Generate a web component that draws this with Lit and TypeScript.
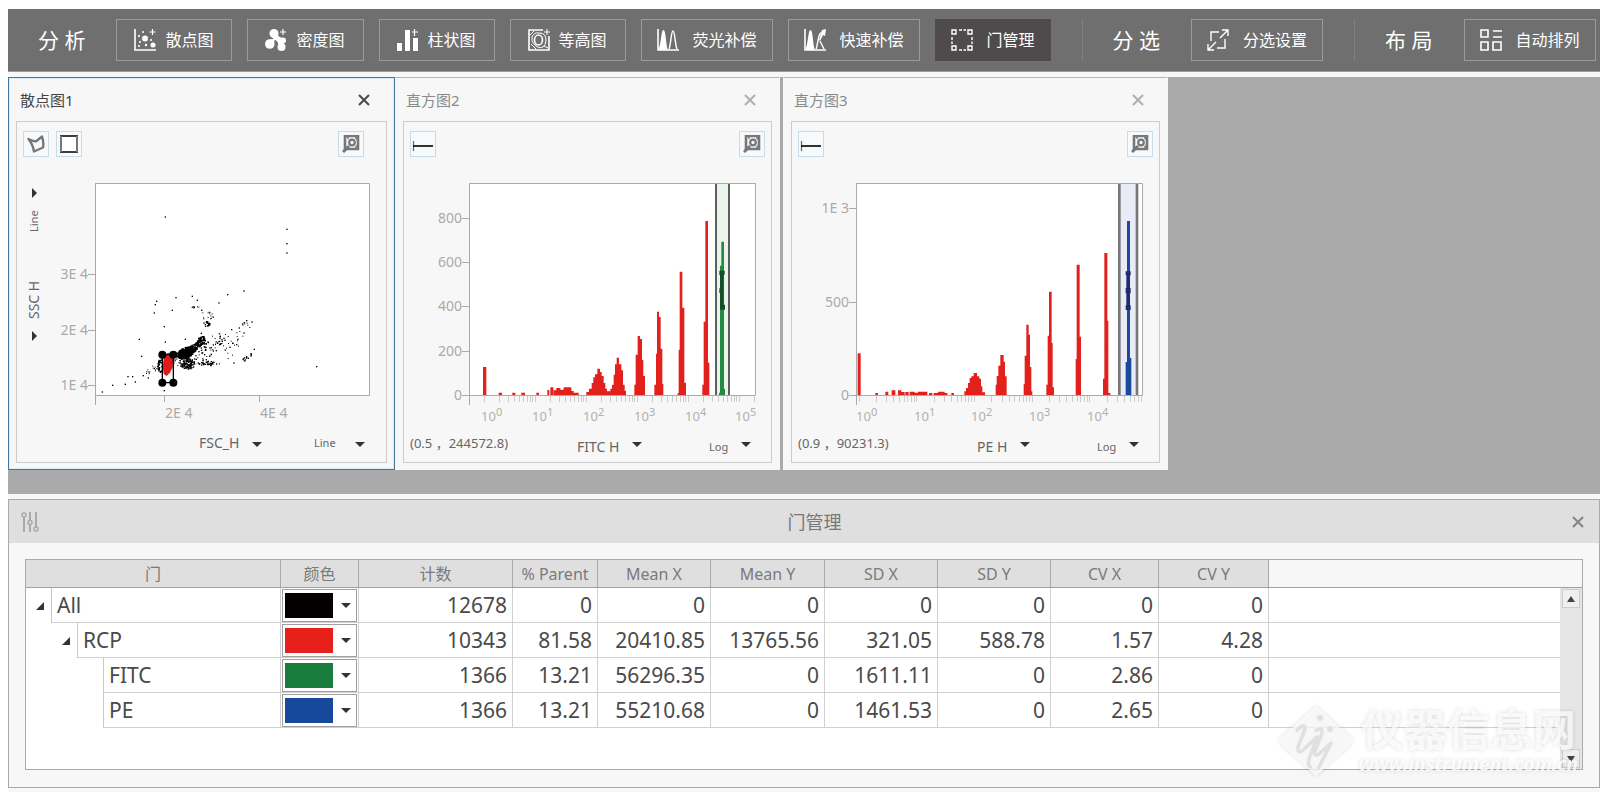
import { LitElement, html, svg, css } from "lit";
import { customElement, property } from "lit/decorators.js";

type Bar = [from: number, to: number, top: number];

const AXIS_GREY = "#aaaaaa";

const arrowIcon = html`<svg class="arrow" width="10" height="5" viewBox="0 0 10 5" aria-hidden="true"><path d="M0 0h10L5 5z" fill="currentColor" /></svg>`;
const closeIcon = html`<svg width="12" height="12" viewBox="0 0 12 12" aria-hidden="true"><path d="M1 1l10 10M11 1L1 11" stroke="currentColor" stroke-width="2" /></svg>`;

const icons: Record<string, unknown> = {
  scatter: svg`<path d="M1 0v21h21" fill="none" stroke="#fff" stroke-width="1.6"/><g fill="#fff"><circle cx="11" cy="9.500" r="3"/><circle cx="5" cy="7" r="1.1"/><circle cx="6" cy="13" r="1"/><circle cx="5" cy="17" r="1.1"/><circle cx="12" cy="16" r="1.2"/><circle cx="17" cy="11" r="1"/><circle cx="19" cy="16" r="2.500"/><circle cx="9" cy="3" r="1"/></g><path d="M18.500 0v6M15.500 3h6" stroke="#fff" stroke-width="1.2"/>`,
  density: svg`<g fill="#fff"><circle cx="9" cy="4.500" r="4.500"/><circle cx="4.800" cy="15" r="4.800"/><circle cx="16.500" cy="18" r="4"/><circle cx="18" cy="11.500" r="3"/><path d="M12.500 4q0 4 5 5l0 5 2 3-6 0q0-4-3-6-4-2-4-6zM5 10.500q5 0 5-4l1 4q-2 0-2 4z"/></g><path d="M18 0v6M15 3h6" stroke="#fff" stroke-width="1.2"/>`,
  bars: svg`<g fill="#fff"><rect x="0" y="14" width="5" height="8"/><rect x="8" y="1" width="5" height="21"/><rect x="16" y="9" width="5" height="13"/></g><path d="M17.500 0v7M15 3h6" stroke="#fff" stroke-width="1.2"/>`,
  contour: svg`<g fill="none" stroke="#fff"><path d="M15 1H1v20h20V7" stroke-width="1.6"/><path d="M4 8q2-5 7-4 7 0 7 7 0 5-3 7-5 2-9-3-3-3-2-7z" stroke-width="1"/><ellipse cx="10.500" cy="11" rx="4" ry="5" stroke-width="1.600"/><path d="M2 6l4-4M3 15l5 5M16 17l4 2" stroke-width="1"/><path d="M19 0v6M16 3h6" stroke-width="1"/></g>`,
  comp: svg`<path d="M1 0v21h21" fill="none" stroke="#fff" stroke-width="1.600"/><path d="M1 21C4 18 4 1 6.500 1S9 17 11 21z" fill="#fff"/><path d="M12 20C14 16 14 2 16 2s2 14 4 18" fill="none" stroke="#fff" stroke-width="1.400"/>`,
  fastcomp: svg`<path d="M1 0v21h21" fill="none" stroke="#fff" stroke-width="1.600"/><path d="M1 21C4 18 4 1 6.500 1S9 17 11 21z" fill="#fff"/><path d="M12 20C14 16 14 4 17 4M16 12l4 8" fill="none" stroke="#fff" stroke-width="1.400"/><path d="M18 1l4-1-1 7-2-1-3 6-1-1 2-7z" fill="#fff"/>`,
  gate: svg`<g fill="none" stroke="#fff" stroke-width="1.400"><path d="M1 1h4v4H1zM17 1h4v4h-4zM1 17h4v4H1zM17 17h4v4h-4z"/><path d="M8 1h7M8 21h7M1 8v7M21 8v7" stroke-dasharray="3 1.500"/></g>`,
  sort: svg`<g fill="none" stroke="#fff" stroke-width="1.400"><path d="M15 1h6v6M21 1l-8 8M7 21H1v-6M1 21l8-8"/><path d="M12 3H4v9M18 10v9h-8"/></g>`,
  layout: svg`<g fill="none" stroke="#fff" stroke-width="1.600"><path d="M1 1h7v7H1zM1 13h7v8H1zM13 13h8v8h-8zM13 2h9M13 8h9"/></g>`,
};

const toolGroups = [
  {
    title: "分 析",
    tools: [
      { label: "散点图", icon: "scatter", tight: true },
      { label: "密度图", icon: "density", tight: true },
      { label: "柱状图", icon: "bars", tight: true },
      { label: "等高图", icon: "contour", tight: true },
      { label: "荧光补偿", icon: "comp" },
      { label: "快速补偿", icon: "fastcomp" },
      { label: "门管理", icon: "gate", active: true },
    ],
  },
  { title: "分 选", tools: [{ label: "分选设置", icon: "sort" }] },
  { title: "布 局", tools: [{ label: "自动排列", icon: "layout" }] },
] as { title: string; tools: { label: string; icon: string; tight?: boolean; active?: boolean }[] }[];

@customElement("tool-bar")
class ToolBar extends LitElement {
  static styles = css`
    :host { display: block; }
    .bar { display: flex; align-items: center; height: 63px; background: #6f6f6f; border-bottom: 1px solid #9c9c9c; box-sizing: border-box; white-space: nowrap; }
    .group { display: flex; align-items: center; gap: 31px; padding: 0 31px 0 30px; height: 42px; }
    .group + .group { border-left: 1px solid #7f7f7f; }
    .title { margin: 0; font-size: 21px; line-height: 28px; font-weight: 400; color: #fff; }
    .tools { display: flex; gap: 15px; }
    .tool { display: flex; align-items: center; gap: 14px; height: 42px; padding: 0 15px; box-sizing: border-box; border: 1px solid #9b9b9b; background: transparent; color: #fff; font-family: inherit; font-size: 16px; line-height: 20px; }
    .tight { gap: 9px; padding: 0 18px 0 17px; }
    .active { background: #4f4b4c; border-color: #4f4b4c; }
  `;
  render() {
    return html`<nav class="bar">
      ${toolGroups.map((g) => html`<section class="group">
        <h2 class="title">${g.title}</h2>
        <div class="tools">
          ${g.tools.map((t) => html`<button class="tool ${t.tight ? "tight" : ""} ${t.active ? "active" : ""}">
            <svg width="22" height="22" viewBox="0 0 22 22" aria-hidden="true">${icons[t.icon]}</svg>${t.label}</button>`)}
        </div>
      </section>`)}
    </nav>`;
  }
}

/* Deterministic noise for the event cloud. */
function noise(seed: number) {
  let s = seed;
  return () => {
    s = (s * 16807) % 2147483647;
    return s / 2147483647;
  };
}

/* cx, cy, spread x, spread y, slope, count, dot size */
const clusters: [number, number, number, number, number, number, number][] = [
  [556, 832, 26, 16, -0.3, 260, 5],
  [578, 818, 20, 12, -0.5, 80, 5],
  [601, 796, 12, 13, -0.3, 40, 5],
  [562, 866, 22, 16, 0, 90, 4],
  [540, 858, 26, 18, 0, 30, 3],
  [622, 865, 26, 7, 0, 30, 4],
  [590, 835, 60, 30, -0.3, 50, 4],
  [655, 820, 70, 48, -0.2, 40, 3],
  [660, 795, 16, 14, 0, 12, 4],
  [720, 765, 34, 26, -0.5, 10, 3],
  [740, 846, 14, 10, -0.5, 12, 4],
  [619, 746, 10, 8, 0, 20, 4],
  [620, 722, 20, 12, 0, 14, 3],
  [585, 697, 16, 3, 0, 9, 3],
  [480, 872, 9, 20, 0, 36, 4],
  [455, 886, 18, 16, -0.3, 14, 3],
];

const strayEvents: [number, number][] = [
  [496, 427], [861, 464], [861, 507], [861, 535], [732, 649], [683, 660], [657, 685], [528, 669], [577, 665],
  [592, 677], [470, 680], [466, 690], [463, 715], [517, 707], [493, 756], [418, 794], [496, 802], [425, 845],
  [556, 794], [604, 776], [605, 707], [740, 738], [733, 744], [756, 742], [728, 748], [695, 765], [718, 760],
  [732, 775], [763, 824], [754, 841], [702, 865], [950, 876], [384, 906], [398, 906], [406, 922], [376, 929],
  [338, 932], [307, 952], [430, 903], [445, 910], [493, 948], [714, 794], [710, 810], [698, 806], [690, 818], [676, 826],
];

function cloud() {
  const rnd = noise(4711);
  const dots: unknown[] = [];
  for (const [cx, cy, sx, sy, slope, count, size] of clusters) {
    for (let i = 0; i < count; i++) {
      const a = rnd() * Math.PI * 2;
      const r = Math.sqrt(rnd());
      const dx = Math.cos(a) * r * sx;
      const dy = Math.sin(a) * r * sy + dx * slope;
      dots.push(svg`<rect x=${Math.round(cx + dx)} y=${Math.round(cy + dy)} width=${size} height=${size} />`);
    }
  }
  for (const [x, y] of strayEvents) dots.push(svg`<rect x=${x - 2} y=${y - 2} width="4" height="4" />`);
  return dots;
}

const fitcBars: Bar[] = [
  [278, 288, 877], [325, 335, 954], [366, 375, 954], [393, 404, 954], [438, 446, 954], [471, 477, 946], [480, 489, 938],
  [490, 498, 947], [498, 510, 940], [510, 520, 945], [520, 543, 938], [543, 550, 949], [550, 565, 954],
  [588, 596, 952], [596, 604, 942], [604, 609, 925], [609, 614, 908], [614, 621, 899], [621, 629, 882], [629, 634, 892],
  [634, 640, 904], [640, 645, 925], [645, 650, 942], [650, 660, 950], [660, 665, 942], [665, 670, 930], [670, 674, 900],
  [674, 679, 869], [679, 686, 849], [686, 693, 869], [693, 698, 887], [698, 703, 930], [703, 707, 948],
  [732, 736, 930], [736, 742, 840], [741, 749, 784], [749, 755, 793], [755, 759, 856], [759, 764, 904],
  [792, 797, 930], [796, 800, 837], [799, 806, 711], [806, 811, 727], [811, 816, 822], [816, 819, 928],
  [862, 865, 955], [864, 868, 825], [867, 876, 591], [876, 882, 699], [882, 887, 924],
  [936, 940, 930], [939, 945, 741], [943, 953, 439], [953, 957, 864],
];

const peBars: Bar[] = [
  [234, 243, 836], [287, 295, 955], [317, 326, 951], [336, 347, 947], [355, 365, 947], [365, 375, 952], [377, 387, 952],
  [390, 405, 951], [405, 415, 954], [415, 443, 951], [448, 458, 955], [462, 475, 955], [475, 495, 951], [495, 503, 955],
  [515, 523, 955], [554, 559, 950], [559, 565, 940], [565, 570, 925], [570, 575, 910], [575, 582, 905], [582, 592, 895],
  [592, 599, 905], [599, 604, 912], [604, 608, 935], [608, 616, 953], [648, 651, 930], [651, 656, 904], [655, 662, 873],
  [662, 672, 841], [672, 676, 861], [676, 681, 905], [732, 735, 928], [735, 740, 843], [739, 747, 750], [747, 751, 780],
  [751, 755, 877], [754, 758, 950], [800, 804, 930], [804, 808, 783], [808, 816, 651], [816, 819, 805], [818, 823, 938],
  [888, 891, 853], [891, 900, 570], [900, 904, 786], [970, 974, 912], [973, 983, 535], [983, 986, 738], [986, 992, 955],
];

interface PlotSpec {
  width: number;
  left: number;
  plotWidth: number;
  originX: number;
  yTicks: [label: string, y: number][];
  xTicks: [label: string, power: string, x: number][];
  decade?: { start: number; step: number; end: number };
  data: unknown;
}

/* One outline per series, so that touching bars share no antialiased seam. */
const bars = (list: Bar[], fill: string) => {
  let d = "";
  let end = -1;
  for (const [a, b, t] of list) {
    if (a > end) d += `${end < 0 ? "" : "V961z"}M${a} 961V${t}H${b}`;
    else d += `V${t}H${b}`;
    end = b;
  }
  return svg`<path fill=${fill} d="${d}V961z" />`;
};

const scatterSpec: PlotSpec = {
  width: 329, left: 38, plotWidth: 275, originX: 285,
  yTicks: [["3E 4", 117], ["2E 4", 173], ["1E 4", 228]],
  xTicks: [["2E 4", "", 108], ["4E 4", "", 203]],
  data: svg`<g fill="#000">${cloud()}</g>
    <path d="M487 840h33v84h-33z" fill="#fff" fill-opacity="0.8"/>
    <path d="M492 844q10-14 22-8l6 12-2 30-8 16-10 10-9-6-3-22z" fill="#e01b1b"/>
    <path d="M487 840h33v84h-33z" fill="none" stroke="#000" stroke-width="4"/>
    <g fill="#000"><circle cx="487" cy="840" r="12"/><circle cx="520" cy="840" r="12"/><circle cx="487" cy="924" r="12"/><circle cx="520" cy="924" r="12"/></g>`,
};

const fitcSpec: PlotSpec = {
  width: 369, left: 65, plotWidth: 287, originX: 236,
  yTicks: [["800", 61], ["600", 105], ["400", 149], ["200", 194], ["0", 238]],
  xTicks: [["10", "0", 77], ["10", "1", 128], ["10", "2", 179], ["10", "3", 230], ["10", "4", 281], ["10", "5", 331]],
  decade: { start: 280, step: 153, end: 1092 },
  data: svg`<rect x="978" y="325" width="38" height="636" fill="#ebf4eb"/>
    <path d="M977 325v636M1016 325v636" stroke="#111" stroke-width="4"/>
    ${bars(fitcBars, "#e2201c")}
    ${bars([[986, 989, 954], [988, 993, 573], [992, 1001, 501], [1000, 1004, 942]], "#228a42")}
    <path d="M987 588h16v12h-3v90h4v15h-15v-50h-2v-14h2v-40h-2z" fill="#12502a"/>`,
};

const peSpec: PlotSpec = {
  width: 369, left: 64, plotWidth: 287, originX: 229,
  yTicks: [["1E 3", 51], ["500", 145], ["0", 238]],
  xTicks: [["10", "0", 64], ["10", "1", 122], ["10", "2", 179], ["10", "3", 237], ["10", "4", 295]],
  decade: { start: 237, step: 173, end: 1088 },
  data: svg`<rect x="1019" y="325" width="54" height="636" fill="#e9ebf6"/>
    <path d="M1019 325v636M1072 325v636" stroke="#777" stroke-width="8"/>
    ${bars(peBars, "#e2201c")}
    ${bars([[1038, 1042, 862], [1041, 1051, 439], [1050, 1055, 850]], "#1b4a9c")}
    <path d="M1038 590h15v12h-2v38h2v16h-2v36h2v14h-15v-14h2v-36h-2v-16h2v-38h-2z" fill="#1f2c6c"/>`,
};

@customElement("event-plot")
class EventPlot extends LitElement {
  @property({ attribute: false }) spec!: PlotSpec;
  static styles = css`
    :host { display: block; }
    .plot { display: block; font-family: "Noto Sans", "Noto Sans CJK SC", sans-serif; }
    .tick { font-size: 14px; fill: #aaaaaa; }
    .base { font-size: 13px; fill: #b0b0b0; }
    .power { font-size: 11px; }
  `;
  private minor() {
    const { decade: d, left, originX } = this.spec;
    if (!d) return null;
    const marks: number[] = [];
    for (let k = 0; k < 6; k++) {
      for (let m = 1; m < 10; m++) {
        const at = d.start + d.step * (k + Math.log10(m));
        if (at < d.end) marks.push(left + Math.round((at - originX) / 3));
      }
    }
    return svg`<g fill="#cdcdcd">${marks.map((x) => svg`<rect x=${x} y="239" width="1" height="6" />`)}</g>`;
  }
  render() {
    const s = this.spec;
    const log = !!s.decade;
    return html`<svg class="plot" width=${s.width} height="270" viewBox="0 0 ${s.width} 270" role="img">
      <rect x=${s.left} y="26" width=${s.plotWidth} height="212" fill="#fff" />
      <svg x=${s.left} y="26" width=${s.plotWidth} height="212" viewBox="${s.originX} 325 ${s.plotWidth * 3} 636" preserveAspectRatio="none">${s.data}</svg>
      <path d="M${s.left + 0.5} 26.5h${s.plotWidth - 1}v212h${1 - s.plotWidth}M${s.left + 0.5} 26v222" fill="none" stroke=${AXIS_GREY} />
      ${this.minor()}
      ${s.yTicks.map(([t, y]) => svg`<rect x=${s.left - 7} y=${y} width="7" height="1" fill=${AXIS_GREY} />
        <text class="tick" x=${s.left - 7} y=${y + 5} text-anchor="end">${t}</text>`)}
      ${s.xTicks.map(([t, p, x]) => log
        ? svg`<text class="base" x=${x} y="264">${t}<tspan class="power" dy="-5">${p}</tspan></text>`
        : svg`<rect x=${x - 1} y="239" width="1" height="6" fill=${AXIS_GREY} /><text class="tick" x=${x} y="261">${t}</text>`)}
    </svg>`;
  }
}

const polygonIcon = html`<svg width="18" height="18" viewBox="0 0 18 18" aria-hidden="true"><path d="M1.500 4q5 3 8 2L15 1.500q2 6 1 11l-9 4q-1-7-5.500-12.500z" fill="none" stroke="#777" stroke-width="2.400" stroke-linejoin="round"/></svg>`;
const rectIcon = html`<svg width="18" height="18" viewBox="0 0 18 18" aria-hidden="true"><path d="M0 1h18v16H0z" fill="#fff"/><path d="M0 1h18M0 17h18" stroke="#000" stroke-width="1.500"/><path d="M1 1v16M17 1v16" stroke="#777" stroke-width="2"/></svg>`;
const rangeIcon = html`<svg width="22" height="18" viewBox="0 0 22 18" aria-hidden="true"><path d="M1.500 6v10" stroke="#666" stroke-width="1.200"/><path d="M1 11h20" stroke="#000" stroke-width="1.600"/></svg>`;
const zoomIcon = html`<svg width="18" height="18" viewBox="0 0 18 18" aria-hidden="true"><path d="M3 1h13v13H3z" fill="none" stroke="#777" stroke-width="2.600"/><circle cx="10" cy="7.500" r="2.800" fill="none" stroke="#777" stroke-width="2.200"/><path d="M1 17l6-6" stroke="#777" stroke-width="3"/><path d="M13 3h2v2M5 3h2M13 12h2v-2" stroke="#777" stroke-width="1.400" fill="none"/></svg>`;

@customElement("chart-window")
class ChartWindow extends LitElement {
  @property() heading = "";
  @property() coords = "";
  @property() channel = "";
  @property() scale = "";
  @property({ type: Boolean }) selected = false;
  @property({ attribute: false }) spec!: PlotSpec;

  static styles = css`
    :host { display: block; flex: none; width: 385px; }
    :host([selected]) { width: 387px; }
    .window { background: #f7f7f7; border: 1px solid #f7f7f7; border-top-color: #b4b4b4; padding: 0 7px 6px; color: #8a8a8a; }
    .selected { border-color: #3f789c; color: #444; box-shadow: inset 0 0 0 1px #dcedf7; }
    .head { display: flex; align-items: center; justify-content: space-between; height: 43px; padding: 0 16px 0 3px; }
    .selected .head { padding: 0 17px 0 4px; }
    .name { margin: 0; font-size: 15px; line-height: 20px; font-weight: 400; }
    .close { display: flex; padding: 0; border: 0; background: none; color: #b0b0b0; }
    .selected .close { color: #4a4a4a; }
    .frame { border: 1px solid #cccccc; padding-top: 9px; }
    .tools { display: flex; gap: 7px; padding: 0 6px; }
    .selected .tools { padding-right: 22px; }
    .icon { display: flex; align-items: center; justify-content: center; width: 26px; height: 26px; padding: 0; border: 1px solid #c9dbe6; background: #f7fafc; box-sizing: border-box; }
    .push { margin-left: auto; }
    .body { display: flex; }
    .side { flex: none; width: 40px; padding: 31px 0 0 7px; box-sizing: border-box; }
    .strip { display: flex; justify-content: space-between; width: 153px; height: 20px; transform-origin: 0 0; transform: rotate(-90deg) translateX(-100%); }
    .foot { display: flex; align-items: center; height: 35px; padding: 0 20px 0 6px; gap: 67px; color: #666; }
    .selected .foot { gap: 52px; padding-right: 21px; }
    .coords { flex: 1; margin: 0 -67px 0 0; font-size: 13px; line-height: 18px; white-space: pre; padding-bottom: 4px; }
    .picker { display: flex; align-items: flex-end; gap: 12px; height: 22px; color: #666; }
    .selected .picker { align-items: flex-start; }
    .picker.wide { gap: 19px; }
    .strip .picker { align-items: center; height: 20px; }
    .reverse { flex-direction: row-reverse; }
    .choice { appearance: none; border: 0; margin: 0; padding: 0; background: transparent; color: inherit; font-family: inherit; font-size: 14px; line-height: 18px; height: 18px; }
    .small { font-size: 11px; }
    .arrow { align-self: center; color: #333; }
  `;

  private picker(label: string, value: string, small = false, extra = "") {
    return html`<div class="picker ${extra}">
      <select class="choice ${small ? "small" : ""}" aria-label=${label}><option>${value}</option></select>${arrowIcon}
    </div>`;
  }

  render() {
    return html`<article class="window ${this.selected ? "selected" : ""}">
      <header class="head"><h3 class="name">${this.heading}</h3><button class="close" aria-label="关闭">${closeIcon}</button></header>
      <div class="frame">
        <div class="tools">
          ${this.selected
            ? html`<button class="icon" aria-label="多边形门">${polygonIcon}</button><button class="icon" aria-label="矩形门">${rectIcon}</button>`
            : html`<button class="icon" aria-label="区间门">${rangeIcon}</button>`}
          <button class="icon push" aria-label="缩放">${zoomIcon}</button>
        </div>
        <div class="body">
          ${this.selected
            ? html`<div class="side"><div class="strip">
                ${this.picker("Y 通道", "SSC H", false, "reverse")}
                ${this.picker("Y 刻度", "Line", true)}
              </div></div>`
            : null}
          <event-plot .spec=${this.spec}></event-plot>
        </div>
        <footer class="foot">
          <p class="coords">${this.coords}</p>
          ${this.picker("X 通道", this.channel)}
          ${this.picker("X 刻度", this.scale, true, this.selected ? "wide" : "")}
        </footer>
      </div>
    </article>`;
  }
}

const columns = ["门", "颜色", "计数", "% Parent", "Mean X", "Mean Y", "SD X", "SD Y", "CV X", "CV Y"];
const columnWidths = [255, 78, 154, 85, 113, 114, 113, 113, 108, 110];
const gates = [
  { name: "All", depth: 1, open: true, color: "#040000", values: ["12678", "0", "0", "0", "0", "0", "0", "0"] },
  { name: "RCP", depth: 2, open: true, color: "#e8201b", values: ["10343", "81.58", "20410.85", "13765.56", "321.05", "588.78", "1.57", "4.28"] },
  { name: "FITC", depth: 3, open: false, color: "#187d3c", values: ["1366", "13.21", "56296.35", "0", "1611.11", "0", "2.86", "0"] },
  { name: "PE", depth: 3, open: false, color: "#16499c", values: ["1366", "13.21", "55210.68", "0", "1461.53", "0", "2.65", "0"] },
];

@customElement("gate-manager")
class GateManager extends LitElement {
  static styles = css`
    :host { display: block; }
    .panel { position: relative; border: 1px solid #aaaaaa; background: #f7f7f7; padding-bottom: 17px; }
    .head { display: flex; align-items: center; height: 43px; padding: 0 15px 0 12px; background: #dfdfdf; color: #777; }
    .title { flex: 1; margin: 0; padding-left: 18px; font-size: 18px; line-height: 24px; font-weight: 400; text-align: center; }
    .close { display: flex; padding: 0; border: 0; background: none; color: #858585; }
    .box { display: flex; margin: 16px 16px 0; height: 209px; border: 1px solid #aaaaaa; background: #fff; }
    .grid { flex: 1; min-width: 0; }
    .table { width: 100%; table-layout: fixed; border-collapse: separate; border-spacing: 0; }
    .th { height: 28px; box-sizing: border-box; padding: 0; border-right: 1px solid #a8a8a8; border-bottom: 1px solid #a0a0a0; background: #dfdfdf; color: #7a7a7a; font-size: 16px; line-height: 20px; font-weight: 400; white-space: nowrap; }
    .blank { background: #f7f7f7; border-right: 0; }
    .td { height: 35px; box-sizing: border-box; padding: 0 5px 0 0; border-right: 1px solid #d0d0d0; border-bottom: 1px solid #d0d0d0; color: #4a4a4a; font-size: 21px; line-height: 28px; font-weight: 400; text-align: right; }
    .rest { border-right: 0; }
    .gate { padding: 0; border-bottom: 0; text-align: left; }
    .node { display: flex; height: 35px; }
    .indent { display: flex; align-items: center; justify-content: flex-end; box-sizing: border-box; padding-right: 7px; border-right: 1px solid #c8c8c8; }
    .toggle { display: flex; padding: 0; border: 0; background: none; }
    .label { flex: 1; display: flex; align-items: center; padding-left: 5px; border-bottom: 1px solid #d0d0d0; }
    .td.paint { padding: 1px 1px 0; }
    .swatch { display: grid; height: 33px; }
    .color { grid-area: 1 / 1; appearance: none; width: 100%; height: 33px; margin: 0; padding: 3px 23px 3px 2px; border: 1px solid #a0a0a0; border-radius: 0; background-clip: content-box; box-sizing: border-box; }
    .arrow { grid-area: 1 / 1; place-self: center end; margin-right: 6px; color: #333; pointer-events: none; }
    .scroll { display: flex; flex-direction: column; width: 22px; }
    .cap { height: 28px; box-sizing: border-box; background: #f7f7f7; border-bottom: 1px solid #a0a0a0; }
    .track { flex: 1; display: flex; flex-direction: column; justify-content: space-between; padding: 1px 2px; background: #e6e6e6; }
    .step { display: flex; align-items: center; justify-content: center; height: 19px; padding: 0; border: 1px solid #cccccc; background: #efefef; }
    .mark { position: absolute; right: 21px; bottom: 9px; display: flex; align-items: center; gap: 4px; pointer-events: none; color: rgba(255, 255, 255, 0.75); filter: drop-shadow(0 0 2px rgba(0, 0, 0, 0.18)); }
    .words { display: flex; flex-direction: column; align-items: center; }
    .brand { font-size: 43px; line-height: 46px; font-weight: 700; }
    .site { font-size: 19px; line-height: 22px; font-weight: 700; font-style: italic; }
  `;
  render() {
    return html`<section class="panel">
      <header class="head">
        <svg width="18" height="20" viewBox="0 0 18 20" aria-hidden="true" fill="#dfdfdf" stroke="#aaaaaa"><path d="M3 5v15M9 0v8M9 13v7M15 0v15" stroke-width="2"/><circle cx="3" cy="3" r="2" stroke-width="1.500"/><circle cx="9" cy="10.500" r="2" stroke-width="1.500"/><circle cx="15" cy="17" r="2" stroke-width="1.500"/></svg>
        <h2 class="title">门管理</h2>
        <button class="close" aria-label="关闭">${closeIcon}</button>
      </header>
      <div class="box">
        <div class="grid">
          <table class="table">
            <colgroup>${columnWidths.map((w) => html`<col width=${w} />`)}<col /></colgroup>
            <thead><tr>${columns.map((c) => html`<th class="th" scope="col">${c}</th>`)}<td class="th blank"></td></tr></thead>
            <tbody>
              ${gates.map((g) => html`<tr>
                <th class="td gate" scope="row"><div class="node">
                  <div class="indent" style="width:${g.depth * 26}px">
                    ${g.open ? html`<button class="toggle" aria-label="折叠"><svg width="8" height="8" viewBox="0 0 8 8" aria-hidden="true"><path d="M8 0v8H0z" fill="#333" /></svg></button>` : null}
                  </div>
                  <div class="label">${g.name}</div>
                </div></th>
                <td class="td paint"><div class="swatch">
                  <select class="color" aria-label="${g.name} 颜色" style="background-color:${g.color}"><option></option></select>${arrowIcon}
                </div></td>
                ${g.values.map((v) => html`<td class="td">${v}</td>`)}
                <td class="td rest"></td>
              </tr>`)}
            </tbody>
          </table>
        </div>
        <div class="scroll">
          <div class="cap"></div>
          <div class="track">
            <button class="step" aria-label="向上"><svg width="8" height="6" viewBox="0 0 8 6" aria-hidden="true"><path d="M0 6h8L4 0z" fill="#444" /></svg></button>
            <button class="step" aria-label="向下"><svg width="8" height="6" viewBox="0 0 8 6" aria-hidden="true"><path d="M0 0h8L4 6z" fill="#444" /></svg></button>
          </div>
        </div>
      </div>
      <div class="mark">
        <svg width="78" height="74" viewBox="0 0 78 74" aria-hidden="true"><path d="M39 2l34 31q4 4 0 8L39 72 5 41q-4-4 0-8z" fill="currentColor"/><path d="M19 27q9-9 9-2l-7 18q-1 6 4 4l15-14-8 22q-2 9 3 8M38 27q8-5 7 2l-7 18q-1 6 4 3l12-11-13 26" fill="none" stroke="#e0e0e0" stroke-width="3.500" stroke-linejoin="round"/><circle cx="43" cy="14" r="3" fill="#e0e0e0"/><circle cx="53" cy="25" r="3" fill="#e0e0e0"/></svg>
        <div class="words"><span class="brand">仪器信息网</span><span class="site">www.instrument.com.cn</span></div>
      </div>
    </section>`;
  }
}

@customElement("app-root")
class AppRoot extends LitElement {
  static styles = css`
    :host { display: block; min-height: 100vh; box-sizing: border-box; padding: 9px 0 0 8px; background: #fff; font-family: "Noto Sans", "Noto Sans CJK SC", sans-serif; }
    .app { display: flex; flex-direction: column; min-height: calc(100vh - 9px); background: #f7f7f7; }
    .desk { display: flex; margin: 5px 0; padding-bottom: 24px; background: #aaaaaa; overflow: hidden; }
    .apart { margin-left: 3px; }
  `;
  render() {
    return html`<div class="app">
      <tool-bar></tool-bar>
      <main class="desk">
        <chart-window selected heading="散点图1" channel="FSC_H" scale="Line" .spec=${scatterSpec}></chart-window>
        <chart-window heading="直方图2" coords="(0.5 ，244572.8)" channel="FITC H" scale="Log" .spec=${fitcSpec}></chart-window>
        <chart-window class="apart" heading="直方图3" coords="(0.9 ，90231.3)" channel="PE H" scale="Log" .spec=${peSpec}></chart-window>
      </main>
      <gate-manager></gate-manager>
    </div>`;
  }
}
